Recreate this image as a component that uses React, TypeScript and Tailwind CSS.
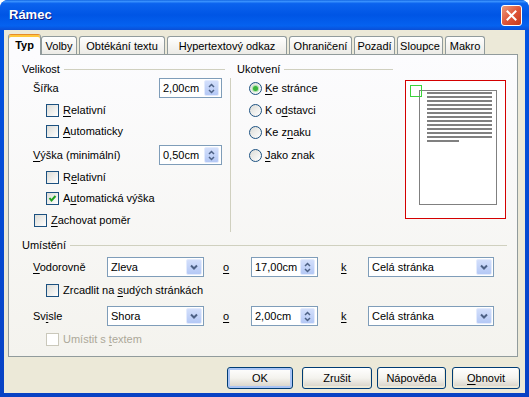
import React from "react";

const U = ({ children }: { children: React.ReactNode }) => (
  <span className="underline underline-offset-[2px]">{children}</span>
);

const CheckBox = ({ checked, disabled }: { checked?: boolean; disabled?: boolean }) => (
  <span
    className={`flex h-[13px] w-[13px] shrink-0 items-center justify-center border ${
      disabled ? "border-[#cac8bb] bg-white" : "border-[#1c5180] bg-gradient-to-br from-[#dcdcd7] to-white"
    }`}
  >
    {checked && (
      <svg width="9" height="9" viewBox="0 0 9 9">
        <path d="M1.5 4 L3.5 6.5 L7.5 2" fill="none" stroke="#21a121" strokeWidth="2" />
      </svg>
    )}
  </span>
);

const Radio = ({ checked }: { checked?: boolean }) => (
  <span className="flex h-[13px] w-[13px] shrink-0 items-center justify-center rounded-full border border-[#1c5180] bg-gradient-to-br from-[#dcdcd7] to-white">
    {checked && <span className="h-[5px] w-[5px] rounded-full bg-[#3bb33b] shadow-[0_0_1px_1px_#a6e0a6]" />}
  </span>
);

const SpinBtn = () => (
  <span className="flex h-[16px] w-[15px] items-center justify-center rounded-[2px] border border-[#e3ebfd] bg-gradient-to-b from-[#d3dffb] to-[#b4c8f5]">
    <svg width="7" height="11" viewBox="0 0 7 11">
      <path d="M1 4 L3.5 1.5 L6 4 M1 7 L3.5 9.5 L6 7" fill="none" stroke="#4d6185" strokeWidth="1.5" />
    </svg>
  </span>
);

const Spin = ({ value, className }: { value: string; className: string }) => (
  <div className={`flex h-[20px] items-center justify-between border border-[#7f9db9] bg-white pl-[3px] pr-[2px] ${className}`}>
    <span>{value}</span>
    <SpinBtn />
  </div>
);

const Combo = ({ value, className }: { value: string; className: string }) => (
  <div className={`flex h-[20px] items-center justify-between border border-[#7f9db9] bg-white pl-[3px] pr-[1px] ${className}`}>
    <span>{value}</span>
    <span className="flex h-[16px] w-[16px] items-center justify-center rounded-[2px] border border-[#e3ebfd] bg-gradient-to-b from-[#d3dffb] to-[#b4c8f5]">
      <svg width="8" height="6" viewBox="0 0 8 6">
        <path d="M1 1.5 L4 4.5 L7 1.5" fill="none" stroke="#4d6185" strokeWidth="2" />
      </svg>
    </span>
  </div>
);

const GroupHead = ({ label, className }: { label: string; className: string }) => (
  <div className={`flex h-[14px] items-center ${className}`}>
    <span>{label}</span>
    <span className="ml-[4px] h-px flex-1 bg-[#d0d0bf]" />
  </div>
);

const CheckRow = ({
  children,
  checked,
  disabled,
  className,
}: {
  children: React.ReactNode;
  checked?: boolean;
  disabled?: boolean;
  className: string;
}) => (
  <div className={`flex h-[14px] items-center gap-[4px] ${disabled ? "text-[#aca899]" : ""} ${className}`}>
    <CheckBox checked={checked} disabled={disabled} />
    <span>{children}</span>
  </div>
);

const RadioRow = ({ children, checked, className }: { children: React.ReactNode; checked?: boolean; className: string }) => (
  <div className={`flex h-[14px] items-center gap-[3px] pl-[12px] ${className}`}>
    <Radio checked={checked} />
    <span>{children}</span>
  </div>
);

const XpButton = ({ children, className, isDefault }: { children: React.ReactNode; className: string; isDefault?: boolean }) => (
  <button
    className={`flex h-[22px] items-center justify-center rounded-[3px] border border-[#003c74] bg-gradient-to-b from-white via-[#f4f3ee] to-[#d6d0c5] ${
      isDefault ? "shadow-[inset_0_0_0_2px_#a9c4f5]" : "shadow-[inset_0_-1px_0_1px_#ece9d8]"
    } ${className}`}
  >
    {children}
  </button>
);

const tabs: [string, string][] = [
  ["Volby", "w-[36px]"],
  ["Obtékání textu", "ml-[2px] w-[86px]"],
  ["Hypertextový odkaz", "ml-[2px] w-[120px]"],
  ["Ohraničení", "ml-[2px] w-[63px]"],
  ["Pozadí", "ml-[2px] w-[41px]"],
  ["Sloupce", "ml-[2px] w-[46px]"],
  ["Makro", "ml-[2px] w-[40px]"],
];

const Preview = () => (
  <div className="ml-[12px] mt-[18px] h-[139px] w-[101px] shrink-0 border border-[#d40000] bg-white">
    <svg width="99" height="137" viewBox="0 0 99 137">
      <rect x="13.5" y="9.5" width="77" height="114" fill="white" stroke="#808080" />
      {Array.from({ length: 12 }).map((_, i) => (
        <rect key={i} x="21" y={11 + i * 4} width="65" height="2" fill="#808080" />
      ))}
      <rect x="21" y="59" width="32" height="2" fill="#808080" />
      <rect x="4.5" y="4.5" width="11" height="11" fill="none" stroke="#3cd23c" />
    </svg>
  </div>
);

export default function App() {
  return (
    <div className="flex h-[397px] w-[529px] flex-col overflow-hidden rounded-t-[8px] bg-gradient-to-b from-[#0055e5] to-[#0842c4] font-['Liberation_Sans',Arial,sans-serif] text-[11px] leading-[14px] text-black">
      {/* title bar */}
      <div className="flex h-[30px] shrink-0 items-center justify-between bg-[linear-gradient(to_bottom,#0a5ddd_0%,#3d95ff_4%,#0b63ee_12%,#0055e5_50%,#0562f0_86%,#0a4fd6_100%)] pl-[9px] pr-[7px]">
        <span className="text-[13px] font-bold text-white [text-shadow:1px_1px_0_#0a1883]">Rámec</span>
        <span className="flex h-[21px] w-[21px] items-center justify-center rounded-[3px] border border-white bg-gradient-to-br from-[#e99a7d] via-[#e0563a] to-[#c5391a]">
          <svg width="11" height="11" viewBox="0 0 11 11">
            <path d="M1.5 1.5 L9.5 9.5 M9.5 1.5 L1.5 9.5" stroke="white" strokeWidth="2" strokeLinecap="square" />
          </svg>
        </span>
      </div>

      {/* body */}
      <div className="mx-[4px] mb-[4px] flex flex-1 flex-col bg-[#ece9d8]">
        {/* tabs */}
        <div className="flex h-[24px] items-end pl-[4px]">
          <div className="relative z-10 -mb-px flex h-[21px] w-[33px] items-center justify-center rounded-t-[3px] border-x border-t border-[#919b9c] border-t-[#e68b2c] bg-[#fcfcfe] font-bold shadow-[inset_0_2px_0_#ffc83c]">
            Typ
          </div>
          {tabs.map(([t, w]) => (
            <div
              key={t}
              className={`flex h-[18px] items-center justify-center rounded-t-[3px] border-x border-t border-[#919b9c] bg-gradient-to-b from-white to-[#ecebe6] ${w}`}
            >
              {t}
            </div>
          ))}
        </div>

        {/* panel */}
        <div className="ml-[4px] flex h-[303px] w-[510px] flex-col border border-[#919b9c] bg-gradient-to-b from-[#fcfcfe] to-[#f4f3ee] pl-[13px] pt-[7px]">
          <div className="flex">
            {/* Velikost */}
            <div className="flex w-[203px] flex-col">
              <GroupHead label="Velikost" className="" />
              <div className="mt-[2px] flex h-[20px] items-center justify-between pl-[11px] pr-[3px]">
                <span>Šířka</span>
                <Spin value="2,00cm" className="w-[63px]" />
              </div>
              <CheckRow className="mt-[5px] pl-[24px]">
                <U>R</U>elativní
              </CheckRow>
              <CheckRow className="mt-[7px] pl-[24px]">
                <U>A</U>utomaticky
              </CheckRow>
              <div className="mt-[7px] flex h-[20px] items-center justify-between pl-[11px] pr-[3px]">
                <span>
                  <U>V</U>ýška (minimální)
                </span>
                <Spin value="0,50cm" className="w-[63px]" />
              </div>
              <CheckRow className="mt-[5px] pl-[24px]">
                R<U>e</U>lativní
              </CheckRow>
              <CheckRow checked className="mt-[7px] pl-[24px]">
                A<U>u</U>tomatická výška
              </CheckRow>
              <CheckRow className="mt-[8px] pl-[12px]">
                <U>Z</U>achovat poměr
              </CheckRow>
            </div>

            <div className="ml-[5px] mt-[16px] h-[154px] w-px bg-[#d0d0bf]" />

            {/* Ukotvení */}
            <div className="ml-[6px] flex w-[156px] flex-col">
              <GroupHead label="Ukotvení" className="" />
              <RadioRow checked className="mt-[5px]">
                <U>K</U>e stránce
              </RadioRow>
              <RadioRow className="mt-[8px]">
                K o<U>d</U>stavci
              </RadioRow>
              <RadioRow className="mt-[8px]">
                Ke z<U>n</U>aku
              </RadioRow>
              <RadioRow className="mt-[9px]">
                <U>J</U>ako znak
              </RadioRow>
            </div>

            <Preview />
          </div>

          {/* Umístění */}
          <div className="mt-[6px] flex w-[485px] flex-col">
            <GroupHead label="Umístění" className="" />
            <div className="mt-[5px] flex h-[20px] items-center">
              <span className="w-[85px] pl-[11px]">
                <U>V</U>odorovně
              </span>
              <Combo value="Zleva" className="w-[97px]" />
              <span className="w-[47px] pl-[19px]">
                <U>o</U>
              </span>
              <Spin value="17,00cm" className="w-[67px]" />
              <span className="w-[50px] pl-[23px]">
                <U>k</U>
              </span>
              <Combo value="Celá stránka" className="w-[126px]" />
            </div>
            <CheckRow className="mt-[6px] pl-[24px]">
              Zrcadlit na <U>s</U>udých stránkách
            </CheckRow>
            <div className="mt-[9px] flex h-[20px] items-center">
              <span className="w-[85px] pl-[11px]">
                Sv<U>i</U>sle
              </span>
              <Combo value="Shora" className="w-[97px]" />
              <span className="w-[47px] pl-[19px]">
                <U>o</U>
              </span>
              <Spin value="2,00cm" className="w-[67px]" />
              <span className="w-[50px] pl-[23px]">
                <U>k</U>
              </span>
              <Combo value="Celá stránka" className="w-[126px]" />
            </div>
            <CheckRow disabled className="mt-[6px] pl-[24px]">
              Umístit s <U>t</U>extem
            </CheckRow>
          </div>
        </div>

        {/* buttons */}
        <div className="mt-[10px] flex justify-end pr-[5px]">
          <XpButton isDefault className="w-[66px]">
            OK
          </XpButton>
          <XpButton className="ml-[9px] w-[70px]">Zrušit</XpButton>
          <XpButton className="ml-[5px] w-[69px]">Nápověda</XpButton>
          <XpButton className="ml-[6px] w-[68px]">
            <U>O</U>bnovit
          </XpButton>
        </div>
      </div>
    </div>
  );
}
